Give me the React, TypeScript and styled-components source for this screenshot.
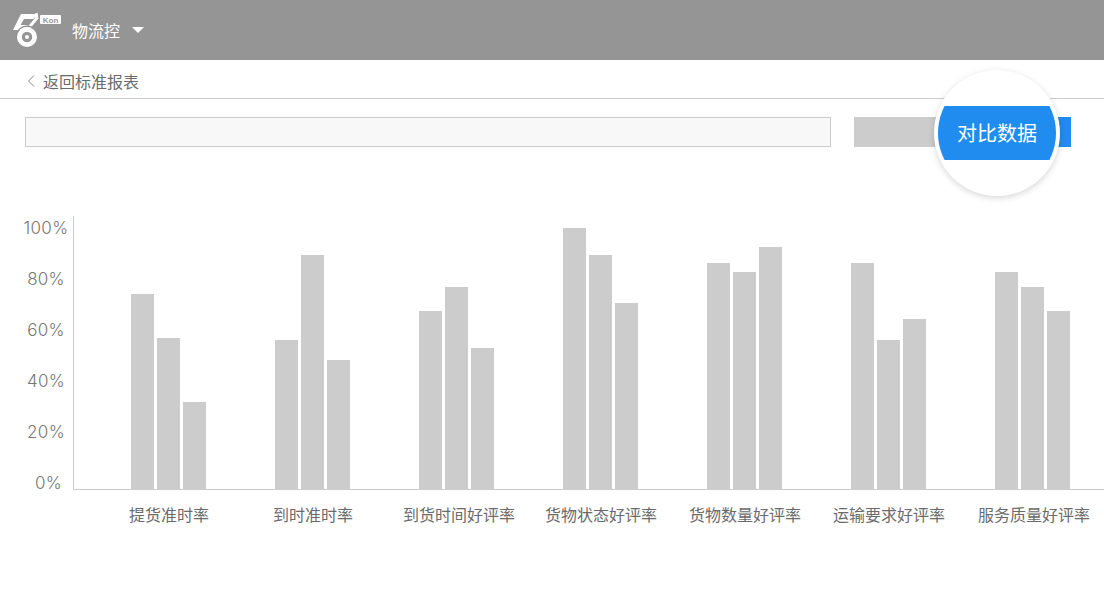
import React from "react";
import styled, { createGlobalStyle } from "styled-components";

const GlobalStyle = createGlobalStyle`
  html, body {
    margin: 0;
    padding: 0;
    background: #fff;
    font-family: "Liberation Sans", "Noto Sans CJK SC", sans-serif;
  }
`;

const CJK = `"Noto Sans CJK SC", "Liberation Sans", sans-serif`;

const Page = styled.div`
  position: relative;
  width: 1104px;
  height: 596px;
  overflow: hidden;
`;

const Header = styled.header`
  height: 60px;
  display: flex;
  align-items: center;
  padding-left: 13px;
  background: #959595;
  color: #fff;
`;

const AppName = styled.div`
  margin-left: 11px;
  font-family: ${CJK};
  font-size: 16px;
  line-height: 22px;
`;

const Caret = styled.span`
  margin-left: 12px;
  width: 0;
  height: 0;
  border-left: 6.5px solid transparent;
  border-right: 6.5px solid transparent;
  border-top: 6px solid #fff;
`;

const BackBar = styled.div`
  height: 34px;
  display: flex;
  align-items: center;
  padding: 4px 0 0 27px;
  gap: 8px;
  border-bottom: 1px solid #ccc;
`;

const BackLabel = styled.span`
  font-family: ${CJK};
  font-size: 16px;
  color: #6b6b6b;
`;

const Toolbar = styled.div`
  display: flex;
  align-items: center;
  gap: 23px;
  padding: 18px 33px 0 25px;
`;

const SearchBox = styled.div`
  flex: 1;
  height: 28px;
  background: #f8f8f8;
  border: 1px solid #ccc;
`;

const CompareTrack = styled.div`
  width: 217px;
  height: 30px;
  background: linear-gradient(to right, #ccc 0 50%, #208cf0 50% 100%);
`;

const Spotlight = styled.div`
  position: absolute;
  left: 934px;
  top: 70px;
  width: 118px;
  height: 118px;
  padding: 4px;
  border-radius: 50%;
  background: #fff;
  box-shadow: 0 2px 6px rgba(0, 0, 0, 0.16);
`;

const SpotlightClip = styled.div`
  width: 118px;
  height: 118px;
  border-radius: 50%;
  overflow: hidden;
  display: flex;
  align-items: center;
`;

const CompareButton = styled.div`
  width: 100%;
  height: 54px;
  background: #208cf0;
  color: #fff;
  font-family: ${CJK};
  font-size: 20px;
  line-height: 54px;
  text-align: center;
`;

const Chart = styled.section`
  display: grid;
  grid-template-columns: 73px 1fr;
  grid-template-rows: 274px auto;
  margin-top: 69px;
`;

const YAxis = styled.div`
  display: flex;
  flex-direction: column;
  align-items: center;
  gap: 31px;
  padding: 2px 0 0 19px;
`;

const YTick = styled.span`
  font-family: Inter, "Liberation Sans", sans-serif;
  font-size: 17px;
  font-weight: 300;
  letter-spacing: 0.3px;
  line-height: 20px;
  color: #777;

  &:last-child {
    margin-left: 5px;
  }
`;

const Plot = styled.div`
  display: flex;
  align-items: flex-end;
  gap: 69px;
  padding-left: 57px;
  border-left: 1px solid #ccc;
  border-bottom: 1px solid #ccc;
  height: 273px;
`;

const Group = styled.div`
  display: flex;
  align-items: flex-end;
  gap: 3px;
`;

const Bar = styled.div<{ $height: number }>`
  width: 23px;
  height: ${({ $height }) => $height}px;
  background: #ccc;
`;

const LabelRow = styled.div`
  grid-column: 2;
  display: flex;
  padding: 13px 0 0 24px;
`;

const XLabel = styled.div<{ $nudge?: number }>`
  flex: 0 0 144px;
  box-sizing: border-box;
  padding-left: ${({ $nudge }) => $nudge ?? 0}px;
  text-align: center;
  white-space: nowrap;
  font-family: ${CJK};
  font-size: 16px;
  line-height: 22px;
  color: #6b6b6b;
`;

const groups = [
  { label: "提货准时率", bars: [195, 151, 87] },
  { label: "到时准时率", bars: [149, 234, 129] },
  { label: "到货时间好评率", bars: [178, 202, 141], nudge: 4 },
  { label: "货物状态好评率", bars: [261, 234, 186] },
  { label: "货物数量好评率", bars: [226, 217, 242] },
  { label: "运输要求好评率", bars: [226, 149, 170] },
  { label: "服务质量好评率", bars: [217, 202, 178], nudge: 2 },
];

const ticks = ["100%", "80%", "60%", "40%", "20%", "0%"];

const Logo = () => (
  <svg width="48" height="40" viewBox="0 0 48 40">
    <path d="M8 4 H21.5 L24.5 2.5 L25.5 9 H11 L7.5 15 H15 L12.5 20 H0 Z" fill="#fff" />
    <path d="M24 9 L13 21" fill="none" stroke="#959595" strokeWidth="5.5" />
    <path d="M24 8 L13 21" fill="none" stroke="#fff" strokeWidth="3" />
    <circle cx="14" cy="27" r="10.8" fill="none" stroke="#959595" strokeWidth="1.4" />
    <circle cx="14" cy="27" r="7.6" fill="none" stroke="#fff" strokeWidth="4.8" />
    <circle cx="14" cy="27" r="2" fill="#fff" />
    <rect x="27" y="5" width="21" height="9" rx="1" fill="#fff" />
    <text
      x="37.5"
      y="12.5"
      fontFamily="Liberation Sans"
      fontWeight="700"
      fontSize="8"
      textAnchor="middle"
      fill="#959595"
    >
      Kon
    </text>
  </svg>
);

const BackChevron = () => (
  <svg width="8" height="12" viewBox="0 0 8 12">
    <path d="M7 0.5 L1.5 6 L7 11.5" fill="none" stroke="#888" strokeWidth="1" />
  </svg>
);

export default function App() {
  return (
    <Page>
      <GlobalStyle />
      <Header>
        <Logo />
        <AppName>物流控</AppName>
        <Caret />
      </Header>
      <BackBar>
        <BackChevron />
        <BackLabel>返回标准报表</BackLabel>
      </BackBar>
      <Toolbar>
        <SearchBox />
        <CompareTrack />
      </Toolbar>
      <Spotlight>
        <SpotlightClip>
          <CompareButton>对比数据</CompareButton>
        </SpotlightClip>
      </Spotlight>
      <Chart>
        <YAxis>
          {ticks.map((t) => (
            <YTick key={t}>{t}</YTick>
          ))}
        </YAxis>
        <Plot>
          {groups.map((g) => (
            <Group key={g.label}>
              {g.bars.map((h, i) => (
                <Bar key={i} $height={h} />
              ))}
            </Group>
          ))}
        </Plot>
        <LabelRow>
          {groups.map((g) => (
            <XLabel key={g.label} $nudge={g.nudge}>
              {g.label}
            </XLabel>
          ))}
        </LabelRow>
      </Chart>
    </Page>
  );
}
